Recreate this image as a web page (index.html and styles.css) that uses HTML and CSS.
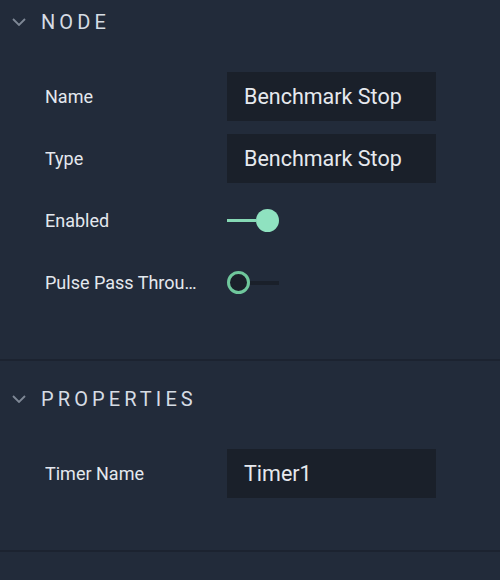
FILE: index.html
```html
<!DOCTYPE html>
<html>
<head>
<meta charset="utf-8">
<link rel="stylesheet" href="styles.css">
</head>
<body>
<div class="panel">
  <section class="section first">
    <div class="header">
      <svg class="chev" width="14" height="8" viewBox="0 0 14 8"><polyline points="1,1 7,7 13,1" fill="none" stroke="#7f8896" stroke-width="1.8"/></svg>
      <span class="title">NODE</span>
    </div>
    <div class="rows">
      <div class="row"><div class="label">Name</div><div class="input">Benchmark Stop</div></div>
      <div class="row"><div class="label">Type</div><div class="input">Benchmark Stop</div></div>
      <div class="row"><div class="label">Enabled</div><div class="toggle on"><span class="track"></span><span class="knob"></span></div></div>
      <div class="row"><div class="label">Pulse Pass Through</div><div class="toggle off"><span class="knob"></span><span class="track"></span></div></div>
    </div>
  </section>
  <section class="section">
    <div class="header">
      <svg class="chev" width="14" height="8" viewBox="0 0 14 8"><polyline points="1,1 7,7 13,1" fill="none" stroke="#7f8896" stroke-width="1.8"/></svg>
      <span class="title">PROPERTIES</span>
    </div>
    <div class="rows">
      <div class="row"><div class="label">Timer Name</div><div class="input">Timer1</div></div>
    </div>
  </section>
</div>
</body>
</html>
```
FILE: styles.css
```css
html, body {
  margin: 0;
  padding: 0;
  background: #222b3a;
  overflow: hidden;
}
body {
  width: 500px;
  height: 580px;
  font-family: Roboto, "Liberation Sans", sans-serif;
  color: #e4e8ee;
}
.section {
  padding: 16px 0 52px;
  border-bottom: 2px solid #1c2330;
}
.section.first {
  margin-top: -16px;
}
.header {
  height: 44px;
  display: flex;
  align-items: center;
}
.chev {
  margin-left: 12px;
  margin-right: 15px;
  display: block;
}
.title {
  font-size: 20px;
  letter-spacing: 4.1px;
  color: #d6dce4;
}
.rows {
  margin-top: 28px;
  display: flex;
  flex-direction: column;
  gap: 13px;
}
.row {
  height: 49px;
  display: flex;
  align-items: center;
}
.label {
  width: 155px;
  margin-left: 45px;
  margin-right: 27px;
  font-size: 18px;
  white-space: nowrap;
  overflow: hidden;
  text-overflow: ellipsis;
}
.input {
  width: 192px;
  height: 49px;
  padding-left: 17px;
  background: #1a202a;
  font-size: 21.5px;
  line-height: 49px;
  color: #e6e9ee;
}
.toggle {
  width: 52px;
  height: 23px;
  display: flex;
  align-items: center;
}
.toggle.on .track {
  flex: 1;
  height: 3px;
  background: #86d9b5;
}
.toggle.on .knob {
  width: 23px;
  height: 23px;
  border-radius: 50%;
  background: #8fe2c0;
}
.toggle.off .knob {
  width: 17px;
  height: 17px;
  border: 3px solid #6fc79c;
  border-radius: 50%;
  background: #1a202a;
}
.toggle.off .track {
  flex: 1;
  height: 4px;
  background: #1a202a;
}
```
